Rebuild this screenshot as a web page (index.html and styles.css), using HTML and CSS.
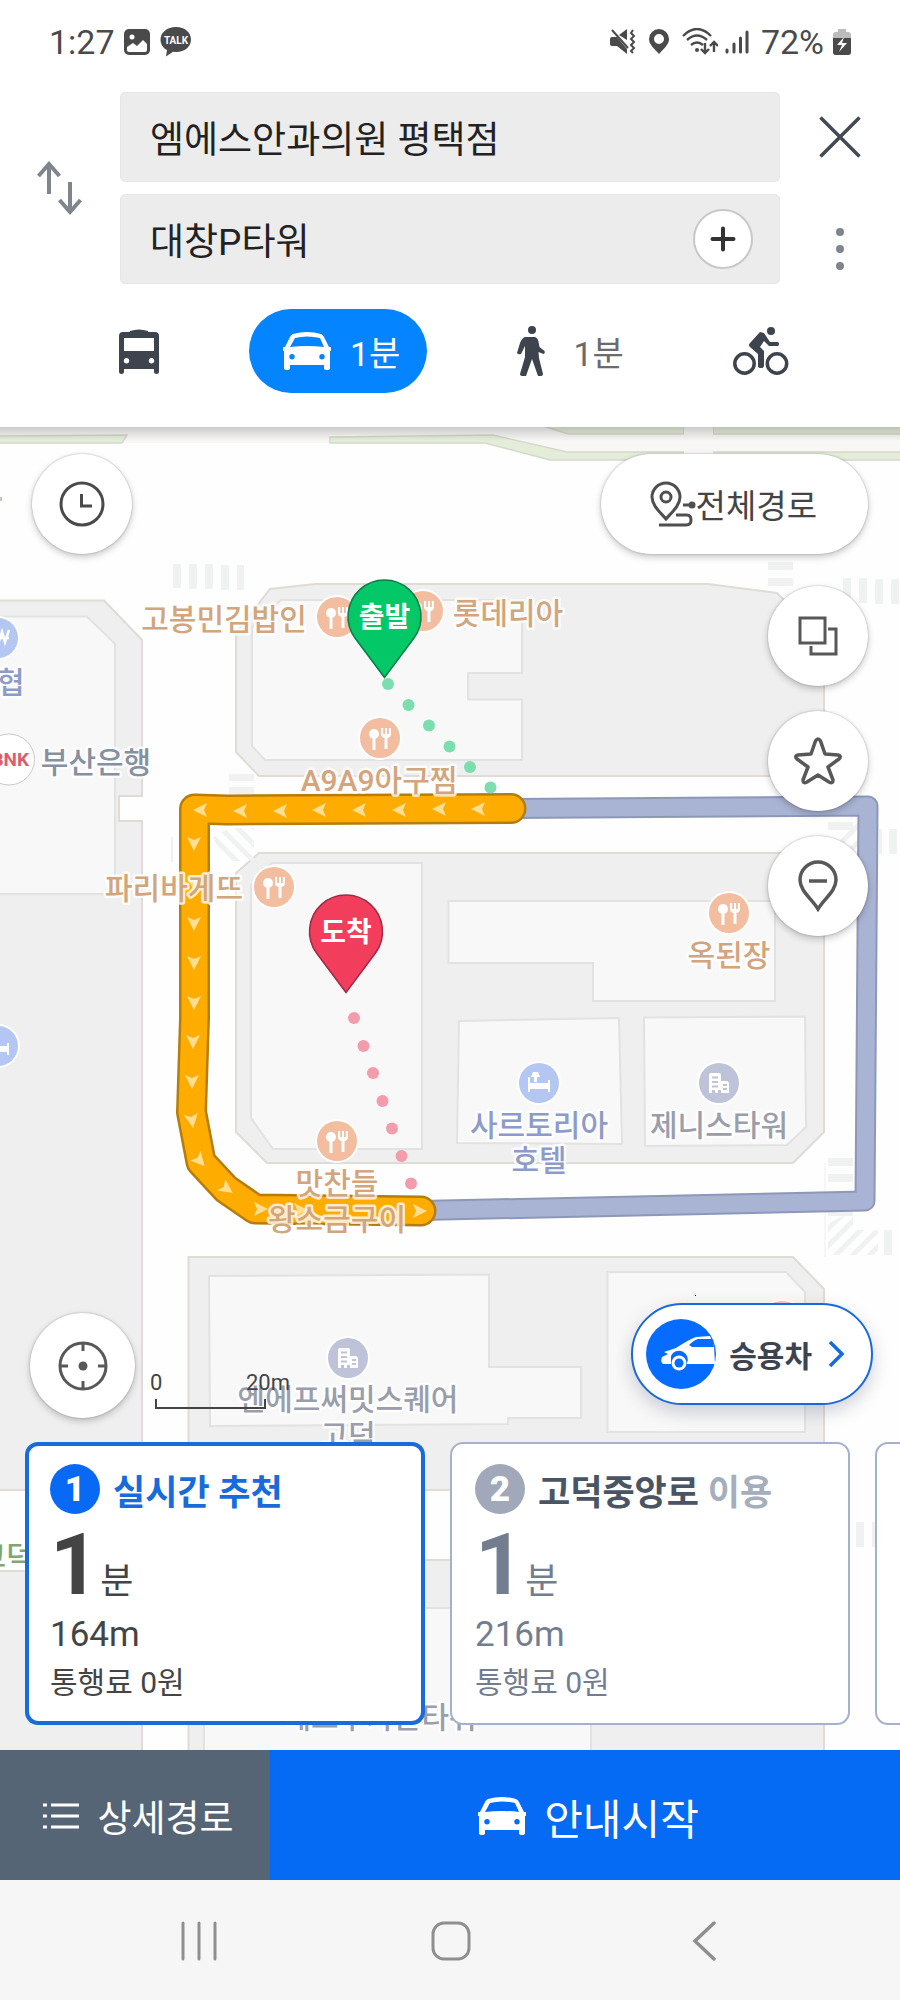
FILE: index.html
```html
<!DOCTYPE html>
<html lang="ko">
<head>
<meta charset="utf-8">
<meta name="viewport" content="width=device-width, initial-scale=1">
<title>길찾기</title>
<link rel="stylesheet" href="styles.css">
</head>
<body>
<header class="header">
  <div class="status">
    <span>1:27</span>
    <svg class="status-picture" width="26" height="26" viewBox="0 0 26 26"><rect width="26" height="26" rx="5" fill="#4a4a4a"/><circle cx="8" cy="8" r="2.500" fill="#fff"/><path d="M3 18l6-4 4 3 6-6 4 4v6q0 2-2 2H5q-2 0-2-2z" fill="#fff"/></svg>
    <svg width="32" height="30" viewBox="0 0 32 30"><path d="M16 0c9 0 15 5.500 15 12.500S25 25 16 25l-3-.2L6 29.500l1-6.500C3 21 .5 17 .5 12.500.5 5.500 7 0 16 0z" fill="#4a4a4a"/><text class="talk" x="16" y="17" text-anchor="middle">TALK</text></svg>
    <svg class="status-right" width="26" height="26" viewBox="0 0 26 26" fill="#4a4a4a"><path d="M0 10q0-2 2-2h5l10 12v5L7 17H2q-2 0-2-2zM9 6l8-6v11z"/><path d="M2 1l16 18M23 1l-2 3 3 3-3 3 3 3-3 3 3 3-3 3 2 2" fill="none" stroke="#4a4a4a" stroke-width="2"/></svg>
    <svg class="status-pin" width="20" height="26" viewBox="0 0 20 26"><path d="M10 0a10 10 0 0 1 10 10c0 6-6 10-10 15C6 20 0 16 0 10A10 10 0 0 1 10 0zm0 5a5 5 0 1 0 0 10 5 5 0 0 0 0-10z" fill="#4a4a4a"/></svg>
    <svg width="36" height="28" viewBox="0 0 36 28" fill="none" stroke="#4a4a4a" stroke-width="2.400"><path d="M1 8Q15-6 29 8M5 12Q15 3 25 12M9 17q6-5 12 0M23 15v10m-4-4l4 4 4-4M32 24V14m-4 4l4-4 4 4"/><circle cx="15" cy="22" r="2" fill="#4a4a4a" stroke="none"/></svg>
    <svg class="status-signal" width="24" height="26" viewBox="0 0 24 26" stroke="#4a4a4a" stroke-width="3" stroke-linecap="round"><path d="M2 21v2M9 15v8M15.500 9v14M22 3v20"/></svg>
    <span>72%</span>
    <svg class="status-battery" width="18" height="26" viewBox="0 0 18 26"><path d="M5 0h8v3h2q3 0 3 3v17q0 3-3 3H3q-3 0-3-3V6q0-3 3-3h2z" fill="#bcbcbc"/><path d="M0 9h18v14q0 3-3 3H3q-3 0-3-3z" fill="#4a4a4a"/><path d="M11 8l-7 8h5l-3 7 8-9H9z" fill="#fff"/></svg>
  </div>
  <div class="search">
    <button class="bare swap" aria-label="출발지와 도착지 바꾸기"><svg width="46" height="54" viewBox="0 0 46 54" fill="none" stroke="#7f858d" stroke-width="4"><path d="M12 33V2M1.500 15L12 3l10.500 12M33 21v31M22.500 39L33 51l10.500-12"/></svg></button>
    <div class="fields">
      <div class="field"><input type="text" aria-label="출발지" value="엠에스안과의원 평택점"></div>
      <div class="field"><input type="text" aria-label="도착지" value="대창P타워"><button class="bare add" aria-label="경유지 추가"><svg width="26" height="26" viewBox="0 0 26 26" stroke="#333" stroke-width="4" stroke-linecap="round"><path d="M13 2.500v21M2.500 13h21"/></svg></button></div>
    </div>
    <div class="side">
      <button class="bare side-button" aria-label="닫기"><svg width="42" height="42" viewBox="0 0 42 42" stroke="#434a54" stroke-width="3.500"><path d="M1.500 1.500l39 39M40.500 1.500l-39 39"/></svg></button>
      <button class="bare side-button more" aria-label="더보기"><svg width="10" height="44" viewBox="0 0 10 44" fill="#7f858d"><circle cx="5" cy="5" r="4"/><circle cx="5" cy="22" r="4"/><circle cx="5" cy="39" r="4"/></svg></button>
    </div>
  </div>
  <nav class="modes">
    <button class="bare mode" aria-label="버스"><svg width="40" height="45" viewBox="0 0 40 45"><path fill="#3d444d" fill-rule="evenodd" d="M11 2q9-3 18 0v1h7q4 0 4 4v36q0 2-2.500 2T35 43v-3H5v3q0 2-2.500 2T0 43V7q0-4 4-4h7zM5 9v13h30V9zm2.500 20a2.700 2.700 0 1 0 0 5.400 2.700 2.700 0 0 0 0-5.400zm25 0a2.700 2.700 0 1 0 0 5.400 2.700 2.700 0 0 0 0-5.400z"/></svg></button>
    <button class="bare mode mode-on"><svg width="48" height="38" viewBox="0 0 48 38"><path fill="#fff" fill-rule="evenodd" d="M10 2q14-4 28 0 2 1 3 3l5 10h2v4h-1v17q0 2-3 2t-3-2v-3H7v3q0 2-3 2t-3-2V19H0v-4h2l5-10q1-2 3-3zm2 4L7 15q17-2 34 0l-4-9q-13-3-25 0zM9 22a2.700 2.700 0 1 0 0 5.400A2.700 2.700 0 0 0 9 22zm30 0a2.700 2.700 0 1 0 0 5.400 2.700 2.700 0 0 0 0-5.400z"/></svg><span>1분</span></button>
    <button class="bare mode mode-walk"><svg width="28" height="50" viewBox="0 0 28 50" fill="#3d444d"><circle cx="15" cy="4" r="4"/><path d="M8 11h10q3 1 3.500 5l1 5 5 4q1 2-1 3l-5-2 .500 6L26 48q0 2-2 2h-3l-6-17-6 17H5q-2 0-2-2l5-17V20l-4 8q-3 1-4-1l3-10q2-5 5-6z"/></svg><span>1분</span></button>
    <button class="bare mode" aria-label="자전거"><svg width="56" height="50" viewBox="0 0 56 50"><g fill="none" stroke="#3d444d" stroke-width="3.500"><circle cx="11.500" cy="37.500" r="9.700"/><circle cx="44" cy="37.500" r="9.700"/></g><circle cx="38" cy="5" r="4" fill="#3d444d"/><path d="M27 6l4 1 6 9h8q2 2 0 4h-9l-5-5-4 6 4 4v15q0 2-3 2t-3-2V28l-8-7q-2-2 0-4z" fill="#3d444d"/></svg></button>
  </nav>
</header>

<main class="map">
  <svg class="map-canvas" viewBox="0 427 900 1323" preserveAspectRatio="xMidYMin slice" role="img" aria-label="경로 지도">
    <defs>
      <pattern id="hatch" width="12" height="12" patternUnits="userSpaceOnUse" patternTransform="rotate(45)"><rect width="5" height="12" fill="#f0f2f2"/></pattern>
      <pattern id="hatch-left" width="12" height="12" patternUnits="userSpaceOnUse" patternTransform="rotate(-45)"><rect width="5" height="12" fill="#f0f2f2"/></pattern>
      <path id="arrow" d="M7 0L-7-7l3 7-3 7z" fill="#ffdd91"/>
      <g id="food"><circle r="22" fill="#fff"/><circle r="20" fill="#f3bd9f"/><g fill="#fff"><circle cx="-6" cy="-4" r="5"/><path d="M-7.500-1h3v13h-3zM1-10h2.200v6H5v-6h2v6h1.800v-6H11v6q0 3-3.500 4v11h-3V0Q1-1 1-4z"/></g></g>
      <g id="hotel"><circle r="22" fill="#fff"/><circle r="20" fill="#b4c7f3"/><path fill="#fff" d="M-11-6h2v6H9v-3h2V9H9V6H-9v3h-2zM-6-11h5l2 5h-3v5h-3v-5h-3z"/></g>
      <g id="office"><circle r="22" fill="#fff"/><circle r="20" fill="#bec3da"/><path fill="#fff" d="M-10 10V-8q0-2 2-2H0q2 0 2 2v6h5q3 0 3 3v9H2V7h-3v3h-3V7h-3v3z"/><path d="M-7-5.500h6M-7-1h6M-7 3.500h6M4 2h4M4 6h4" stroke="#bec3da" stroke-width="2"/></g>
      <linearGradient id="edge" x2="0" y2="1"><stop stop-color="#000" stop-opacity=".22"/><stop offset="1" stop-color="#000" stop-opacity="0"/></linearGradient>
    </defs>
    <path fill="#fefefe" d="M0 427h900v1323H0z"/>
    <path fill="#f8f7f5" d="M0 427h900v25H567l-74-17H330v8H0z"/>
    <g fill="#e4edd9" stroke="#d5d9cb" stroke-width="1.500"><path d="M-2 436l129-1-5 8H-2zM330 437l163-2 74 17h340v8H550l-65-17H330zM540 425l28 9h116v-9zM713 425v9h190v-9z"/></g>
    <path fill="#f8f7f5" d="M684 427h29v33h-29z"/>
    <g class="blocks">
      <path d="M-5 600.500h109l38 39.500v156h-23v25h23v669H-5zM236 752V633l34-44 45-5h393l69 9 47 47v136H259zM236 1132V873l23-20h541l24 23v256l-31 31H267zM188.500 1257H793l31 32v201H188.500zM188.500 1560H824v200H188.500zM-5 1571h147v189H-5z"/>
    </g>
    <g class="buildings">
      <path d="M-5 616.500h92l28 27.500v250H-5zM252 746V627l29-27h241v73h-54v26.500h54V760H265zM251 1118V885l21-22h150v286H273zM448.500 901H775v100H593v-38H448.500zM459 1021l160-3 3 126-165-1zM644 1017.500l161-1 1 110.500-19 18-142 1zM209 1276l280-1.500V1367h92v51h-73v6l-298 2zM607.500 1272H786l19 20v140H607.500zM204 1608h387v150H204z"/>
    </g>
    <path d="M825 1163v94M825 1490v70" stroke="#efefef"/>
    <g fill="#f0f2f2"><path d="M173 564h8v24h-8zM189 564h8v25h-8zM205 564h8v25h-8zM221 565h8v25h-8zM237 565h7v25h-7zM768 562h25v8h-25zM768 578h25v8h-25zM843 578h8v25h-8zM859 578h8v25h-8zM875 579h8v25h-8zM891 579h8v25h-8zM229 774h25v7h-25zM229 787h25v7h-25zM171 837h2v25h-2zM828 822h25v8h-25zM879 829h3v25h-3zM889 829h8v25h-8zM828 1158h25v8h-25zM828 1174h25v8h-25zM828 1212h25v4h-25zM884 1230h8v25h-8zM856 1522h8v25h-8zM872 1522h8v25h-8z"/></g>
    <path d="M213 837l16-9h25v33h-30z" fill="url(#hatch-left)"/>
    <path d="M828 845l25-29h25v37h-50zM828 1223l25-11v18h25v25h-50z" fill="url(#hatch)"/>
    <path fill="#c8c4bf" d="M0 497h2v4H0z"/>

    <g class="route"><path class="alt-edge" d="M511 808.500L868 806 865 1201 421 1210.500"/><path class="alt" d="M511 808.500L868 806 865 1201 421 1210.500"/>
    <path class="main-edge" d="M511 808.500L227 810 194.500 809V1018L191.500 1112 201 1162 226 1189 255 1209 421 1211"/><path class="main" d="M511 808.500L227 810 194.500 809V1018L191.500 1112 201 1162 226 1189 255 1209 421 1211"/></g>
    <g>
      <use href="#arrow" transform="translate(200 810) rotate(180)"/><use href="#arrow" transform="translate(240 811) rotate(180)"/><use href="#arrow" transform="translate(280 811) rotate(180)"/><use href="#arrow" transform="translate(319 810) rotate(180)"/><use href="#arrow" transform="translate(359 810) rotate(180)"/><use href="#arrow" transform="translate(399 810) rotate(180)"/><use href="#arrow" transform="translate(439 809) rotate(180)"/><use href="#arrow" transform="translate(478 809) rotate(180)"/>
      <use href="#arrow" transform="translate(194 844) rotate(90)"/><use href="#arrow" transform="translate(194 884) rotate(90)"/><use href="#arrow" transform="translate(194 924) rotate(90)"/><use href="#arrow" transform="translate(194 963) rotate(90)"/><use href="#arrow" transform="translate(194 1003) rotate(90)"/><use href="#arrow" transform="translate(193 1042) rotate(90)"/><use href="#arrow" transform="translate(192 1082) rotate(90)"/><use href="#arrow" transform="translate(192 1121) rotate(80)"/>
      <use href="#arrow" transform="translate(200 1161) rotate(48)"/><use href="#arrow" transform="translate(227 1189) rotate(36)"/><use href="#arrow" transform="translate(261 1209)"/><use href="#arrow" transform="translate(301 1210)"/><use href="#arrow" transform="translate(420 1211)"/>
    </g>

    <use href="#food" x="337" y="617"/><use href="#food" x="423" y="611"/><use href="#food" x="380" y="738"/><use href="#food" x="274" y="887"/><use href="#food" x="337" y="1141"/><use href="#food" x="729" y="913"/>
    <use href="#hotel" x="539" y="1083"/><use href="#hotel" x="-2" y="1046"/><use href="#office" x="719" y="1083"/><use href="#office" x="348" y="1358"/>
    <circle cx="-2" cy="638" r="22" fill="#fff"/><circle cx="-2" cy="638" r="20" fill="#b4c7f3"/><path d="M-6 632l4 12 4-12 3 10 4-12M-8 638H9" fill="none" stroke="#fff" stroke-width="2.500"/>
    <circle cx="782" cy="1322" r="23" fill="#fff"/><circle cx="782" cy="1322" r="21" fill="#f0c3cf"/>
    <circle cx="9" cy="759.500" r="25.500" fill="#fff" stroke="#c9c9c9"/><text class="bnk" x="29" y="766" text-anchor="end">BNK</text>

    <g class="labels">
      <g fill="#d2a57c"><text x="224" y="630">고봉민김밥인</text><text x="508" y="624">롯데리아</text><text x="379" y="791">A9A9아구찜</text><text x="174" y="899">파리바게뜨</text><text x="337" y="1194">맛찬들</text><text x="337" y="1230">왕소금구이</text><text x="729" y="966">옥된장</text></g>
      <g fill="#8c9bc8"><text x="539" y="1136">사르토리아</text><text x="539" y="1171">호텔</text><text x="-3" y="693">농협</text></g>
      <g fill="#9a9eab"><text x="719" y="1136">제니스타워</text><text x="348" y="1410">엔에프써밋스퀘어</text><text x="348" y="1446">고덕</text><text x="380" y="1728">에코우가든타워</text></g>
      <text x="96" y="773" fill="#8590a0">부산은행</text>
      <text x="6" y="1567" fill="#82a673">고덕</text>
    </g>

    <g fill="#7cdeae"><circle cx="388" cy="684" r="6"/><circle cx="408.500" cy="705" r="6"/><circle cx="429" cy="725.500" r="6"/><circle cx="449.500" cy="746.500" r="6"/><circle cx="470" cy="767" r="6"/><circle cx="490.500" cy="787.500" r="6"/></g>
    <g fill="#f29cac"><circle cx="354" cy="1018" r="6"/><circle cx="363.500" cy="1046" r="6"/><circle cx="373" cy="1073" r="6"/><circle cx="382.500" cy="1101" r="6"/><circle cx="392" cy="1128.500" r="6"/><circle cx="401.500" cy="1156" r="6"/><circle cx="411" cy="1183.500" r="6"/></g>
    <path d="M384.500 677.500L355 638a36.500 36.500 0 1 1 59 0z" fill="#04c767" stroke="#0a7c48" stroke-width="1.500"/>
    <path d="M346 992.500L316.500 953a36.500 36.500 0 1 1 59 0z" fill="#f23e5c" stroke="#a02a45" stroke-width="1.500"/>
    <g class="pin-text"><text x="384.500" y="627">출발</text><text x="346" y="942">도착</text></g>
    <path fill="#222" d="M695 1295h1v1h-1z"/>
    <path fill="url(#edge)" d="M0 427h900v14H0z" opacity=".8"/>
  </svg>

  <div class="overlay">
    <div class="top-tools">
      <button class="bare round" aria-label="출발 시간"><svg width="46" height="46" viewBox="0 0 46 46" fill="none" stroke="#4a4a4a" stroke-width="3"><circle cx="23" cy="23" r="21"/><path d="M22.500 13v12H33"/></svg></button>
      <div class="tool-column">
        <button class="bare whole"><svg width="46" height="46" viewBox="0 0 46 46" fill="none" stroke="#4f4f4f" stroke-width="3"><path d="M16 38C11 32 2 25 2 16a14 14 0 0 1 28 0c0 9-9 16-14 22zM26 34h11q4 0 4 5t-5 5H9M33 24h10"/><circle cx="16" cy="16" r="5"/><circle cx="42" cy="24" r="3.500" fill="#4f4f4f" stroke="none"/></svg><span>전체경로</span></button>
        <button class="bare round" aria-label="지도 겹쳐보기"><svg width="42" height="42" viewBox="0 0 42 42" fill="none" stroke="#585858" stroke-width="3"><path d="M3 3h25v25H3zM31 14h8v25H14v-8"/></svg></button>
        <button class="bare round" aria-label="즐겨찾기"><svg width="50" height="48" viewBox="0 0 50 48" fill="none" stroke="#585858" stroke-width="3.500" stroke-linejoin="round"><path d="M22.500 4q2.500-4 5 0L32 17l13 1q4 1 1 4L35 30l5 13q0 4-4 2L25 38l-11 7q-4 2-4-2l5-13L4 22q-3-3 1-4l13-1z"/></svg></button>
        <button class="bare round" aria-label="핀 숨기기"><svg width="42" height="52" viewBox="0 0 42 52" fill="none" stroke="#585858" stroke-width="3.500"><path d="M21 49C15 39 3 31 3 20a18 18 0 0 1 36 0c0 11-12 19-18 29zM12 21h18"/></svg></button>
      </div>
    </div>
    <div class="bottom-tools">
      <button class="bare round locate" aria-label="현재 위치"><svg width="50" height="50" viewBox="0 0 50 50" fill="none" stroke="#585858" stroke-width="3"><circle cx="25" cy="25" r="23"/><circle cx="25" cy="25" r="4.500" fill="#585858" stroke="none"/><path d="M25 2v8M25 40v8M2 25h8M40 25h8"/></svg></button>
      <div class="scale"><div class="scale-text"><span>0</span><span>20m</span></div><div class="scale-bar"></div></div>
      <button class="bare car-type"><svg width="70" height="70" viewBox="0 0 70 70"><circle cx="35" cy="35" r="35" fill="#056cff"/><path d="M18 33l12-4q12-8 20-11l14-1 4 10 1 18H17q-3-2-1-7l6-3z" fill="#fff"/><path d="M43 26q5-5 9-6h14l2 8H46z" fill="#056cff"/><path d="M25 37a8 8 0 0 1 16 7v2H25z" fill="#056cff"/><circle cx="33" cy="44" r="7.500" fill="#fff"/><circle cx="33" cy="44" r="4.500" fill="#056cff"/></svg><span>승용차</span><svg width="17" height="28" viewBox="0 0 17 28" fill="none" stroke="#1769dc" stroke-width="3.500"><path d="M2 2l12 12L2 26"/></svg></button>
    </div>
    <div class="cards">
      <button class="bare card card-on">
        <span class="card-title"><b class="number">1</b><span>실시간 추천</span></span>
        <span class="time"><b>1</b>분</span><span class="distance">164m</span><span class="toll">통행료 0원</span>
      </button>
      <button class="bare card">
        <span class="card-title"><b class="number">2</b><span>고덕중앙로 <i>이용</i></span></span>
        <span class="time"><b>1</b>분</span><span class="distance">216m</span><span class="toll">통행료 0원</span>
      </button>
      <button class="bare card" aria-label="다음 경로"></button>
    </div>
  </div>
</main>

<div class="actions">
  <button class="bare action detail"><svg width="36" height="28" viewBox="0 0 36 28" stroke="#fff" stroke-width="3"><path d="M8 3h28M8 14h28M8 25h28M0 3h4M0 14h4M0 25h4"/></svg><span>상세경로</span></button>
  <button class="bare action start"><svg width="48" height="38" viewBox="0 0 48 38"><path fill="#fff" fill-rule="evenodd" d="M10 2q14-4 28 0 2 1 3 3l5 10h2v4h-1v17q0 2-3 2t-3-2v-3H7v3q0 2-3 2t-3-2V19H0v-4h2l5-10q1-2 3-3zm2 4L7 15q17-2 34 0l-4-9q-13-3-25 0zM9 22a2.700 2.700 0 1 0 0 5.400A2.700 2.700 0 0 0 9 22zm30 0a2.700 2.700 0 1 0 0 5.400 2.700 2.700 0 0 0 0-5.400z"/></svg><span>안내시작</span></button>
</div>
<footer class="system">
  <button class="bare" aria-label="최근 앱"><svg width="38" height="40" viewBox="0 0 38 40" stroke="#8f8f8f" stroke-width="3" stroke-linecap="round"><path d="M3 2v36M19 2v36M35 2v36"/></svg></button>
  <button class="bare" aria-label="홈"><svg width="40" height="40" viewBox="0 0 40 40" fill="none" stroke="#8f8f8f" stroke-width="3"><rect x="2" y="2" width="36" height="36" rx="11"/></svg></button>
  <button class="bare" aria-label="뒤로"><svg width="38" height="40" viewBox="0 0 38 40" fill="none" stroke="#8f8f8f" stroke-width="3.500" stroke-linecap="round"><path d="M31 2L12 20l19 18"/></svg></button>
</footer>
</body>
</html>
```

FILE: styles.css
```css
* { box-sizing: border-box; }
body {
  margin: 0;
  min-height: 100vh;
  display: flex;
  flex-direction: column;
  background: #fff;
  color: #444;
  font-family: Roboto, "Noto Sans CJK KR", sans-serif;
}
svg { display: block; flex: none; }
.bare {
  margin: 0;
  padding: 0;
  border: 0;
  background: none;
  color: inherit;
  font: inherit;
  cursor: pointer;
}

.header { padding-bottom: 34px; }
.status {
  display: flex;
  align-items: center;
  height: 84px;
  padding: 0 49px;
  font-size: 34px;
  color: #4a4a4a;
}
.status-picture { margin: 0 10px 0 9px; }
.status-right { margin-left: auto; }
.status-pin { margin: 0 13px; }
.status-signal { margin: 0 12px 0 7px; }
.status-battery { margin-left: 9px; }
.talk { font: bold 10px Roboto, sans-serif; fill: #fff; }

.search { display: flex; padding-top: 8px; }
.swap {
  display: grid;
  place-items: center;
  width: 120px;
  height: 192px;
}
.fields {
  flex: 1;
  display: flex;
  flex-direction: column;
  gap: 12px;
}
.field {
  display: flex;
  align-items: center;
  height: 90px;
  padding: 0 26px 0 29px;
  border: 1px solid #e6e6e6;
  border-radius: 5px;
  background: #ececec;
}
.field input {
  flex: 1;
  min-width: 0;
  padding: 0;
  border: 0;
  outline: 0;
  background: none;
  font: 37px Roboto, "Noto Sans CJK KR", sans-serif;
  color: #222;
}
.add {
  display: grid;
  place-items: center;
  width: 60px;
  height: 60px;
  border: 2px solid #c8c8c8;
  border-radius: 50%;
  background: #fff;
}
.side {
  width: 120px;
  display: flex;
  flex-direction: column;
  gap: 34px;
}
.side-button {
  display: grid;
  place-items: center;
  height: 90px;
}
.side .more { height: 66px; }
.modes {
  display: flex;
  gap: 90px;
  height: 84px;
  margin-top: 25px;
  padding-left: 119px;
}
.mode {
  display: flex;
  align-items: center;
  gap: 19px;
  font-size: 34px;
}
.mode-on {
  padding: 0 27px 0 34px;
  border-radius: 42px;
  background: #0484ff;
  color: #fff;
}
.mode-walk { gap: 28px; min-width: 126px; color: #6b6b6b; }

.map {
  position: relative;
  flex: 1;
  display: flex;
  overflow: hidden;
}
.map-canvas {
  position: absolute;
  inset: 0;
  width: 100%;
  height: 100%;
}
.blocks { fill: #efefef; stroke: #dfdcd6; stroke-width: 2; }
.buildings { fill: #f8f8f8; stroke: #e2e2e2; stroke-width: 2; }
.route { fill: none; stroke-linejoin: round; stroke-linecap: round; }
.alt-edge { stroke: #8d98b8; stroke-width: 21; }
.alt { stroke: #a9b4d4; stroke-width: 17; }
.main-edge { stroke: #b47d0c; stroke-width: 31; }
.main { stroke: #ffac00; stroke-width: 26; }
.labels {
  font-size: 30px;
  font-weight: 500;
  text-anchor: middle;
  stroke: #fff;
  stroke-opacity: 0.8;
  stroke-width: 5px;
  stroke-linejoin: round;
  paint-order: stroke;
}
.pin-text { font-size: 28px; font-weight: 700; fill: #fff; text-anchor: middle; }
.bnk { font-size: 19px; font-weight: 700; fill: #dd5d6d; }

.overlay {
  position: relative;
  flex: 1;
  min-width: 0;
  display: flex;
  flex-direction: column;
  padding: 27px 0 25px;
}
.top-tools {
  display: flex;
  justify-content: space-between;
  align-items: flex-start;
  padding: 0 32px;
}
.tool-column {
  display: flex;
  flex-direction: column;
  align-items: flex-end;
  gap: 25px;
}
.round, .whole {
  display: flex;
  align-items: center;
  justify-content: center;
  height: 100px;
  border-radius: 53px;
  background: #fff;
  box-shadow: 0 3px 7px rgba(0, 0, 0, 0.22), 0 0 2px rgba(0, 0, 0, 0.3);
}
.round { width: 100px; }
.whole {
  margin-bottom: 7px;
  padding: 0 51px 0 49px;
  font-size: 33px;
  color: #444;
}
.bottom-tools {
  display: flex;
  align-items: flex-end;
  margin-top: auto;
  padding: 0 27px 24px 30px;
}
.locate { width: 105px; height: 105px; }
.scale {
  width: 111px;
  margin: 0 auto 9px 20px;
  font-size: 22px;
  color: #444;
}
.scale-text {
  display: flex;
  justify-content: space-between;
  margin: 0 -24px 0 -5px;
}
.scale-bar {
  height: 10px;
  margin-top: 4px;
  border: 2px solid #444;
  border-top: 0;
}
.car-type {
  display: flex;
  align-items: center;
  height: 102px;
  margin-bottom: 13px;
  padding: 0 26px 0 13px;
  border: 2px solid #1769dc;
  border-radius: 51px;
  background: #fff;
  box-shadow: 0 7px 18px rgba(40, 50, 90, 0.22);
  font-size: 30px;
  font-weight: 700;
  color: #3d4450;
}
.car-type span { margin: 0 16px 0 13px; }
.cards {
  display: flex;
  gap: 25px;
  padding-left: 25px;
  overflow: hidden;
}
.card {
  flex: none;
  display: flex;
  flex-direction: column;
  align-items: flex-start;
  width: 400px;
  height: 283px;
  padding: 20px 23px;
  border: 2px solid #a3b1cc;
  border-radius: 13px;
  background: #fff;
  color: #727e90;
  text-align: left;
}
.card-on {
  padding: 18px 21px;
  border: 4px solid #176bdb;
  color: #444;
}
.card-title {
  display: flex;
  align-items: center;
  gap: 13px;
  height: 50px;
  font-size: 35px;
  font-weight: 700;
  color: #4a5564;
}
.card-title i { font-style: normal; color: #a5aebd; }
.card-on .card-title { color: #176bdb; }
.number {
  display: grid;
  place-items: center;
  width: 50px;
  height: 50px;
  border-radius: 50%;
  background: #a0a8ba;
  color: #fff;
}
.card-on .number { background: #086af4; }
.time {
  display: flex;
  align-items: baseline;
  gap: 1px;
  height: 86px;
  margin-top: 8px;
  font-size: 36px;
  line-height: 86px;
}
.time b { font-size: 86px; }
.distance { margin-top: 7px; font-size: 35px; line-height: 40px; }
.toll { margin-top: 8px; font-size: 30px; line-height: 40px; }

.actions { display: grid; grid-template-columns: 3fr 7fr; height: 130px; }
.action {
  display: flex;
  align-items: center;
  justify-content: center;
  gap: 18px;
  padding: 2px 0 0 7px;
  color: #fff;
}
.detail { background: #566575; font-size: 37px; }
.start { background: #066bf4; font-size: 42px; }
.system {
  display: flex;
  justify-content: space-between;
  align-items: center;
  height: 120px;
  padding: 2px 179px 0 180px;
  background: #f6f6f6;
}
```
